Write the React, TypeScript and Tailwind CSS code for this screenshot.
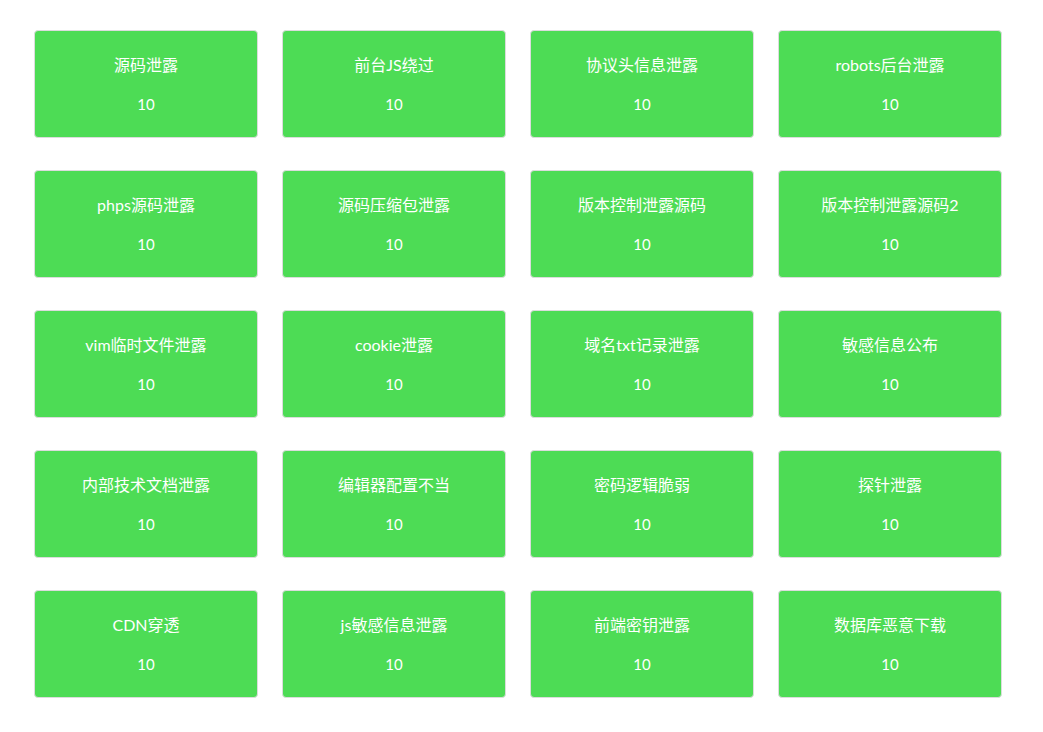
import React from "react";

const items = [
  "源码泄露", "前台JS绕过", "协议头信息泄露", "robots后台泄露",
  "phps源码泄露", "源码压缩包泄露", "版本控制泄露源码", "版本控制泄露源码2",
  "vim临时文件泄露", "cookie泄露", "域名txt记录泄露", "敏感信息公布",
  "内部技术文档泄露", "编辑器配置不当", "密码逻辑脆弱", "探针泄露",
  "CDN穿透", "js敏感信息泄露", "前端密钥泄露", "数据库恶意下载",
];

export default function App() {
  return (
    <div
      className="w-[1043px] h-[732px] bg-white pt-[30px] pl-[34px]"
      style={{ fontFamily: 'Lato, "Noto Sans CJK SC", sans-serif' }}
    >
      <div className="grid w-[968px] grid-cols-4 gap-x-6 gap-y-8">
        {items.map((t) => (
          <div
            key={t}
            className="h-[108px] rounded-[4px] border border-[#dcdcdc] bg-[#4ddc55] text-white flex flex-col items-center pt-[24px] gap-[19px]"
          >
            <div className="text-[16px] leading-[20px]">{t}</div>
            <div className="text-[15px] leading-[20px]">10</div>
          </div>
        ))}
      </div>
    </div>
  );
}
